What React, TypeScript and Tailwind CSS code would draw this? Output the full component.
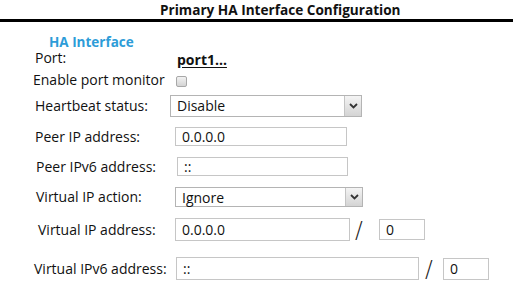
import { useState } from "react"

const font = { fontFamily: '"Open Sans", "Noto Sans", sans-serif' }

function Chevron() {
  return (
    <svg width="9" height="6" viewBox="0 0 9 6">
      <path d="M1 1 L4.5 4.5 L8 1" fill="none" stroke="#333" strokeWidth="1.8" />
    </svg>
  )
}

function FakeSelect({ value, className }: { value: string; className: string }) {
  return (
    <div className={`flex border border-[#b4b4b4] bg-white ${className}`}>
      <div className="flex-1 pl-[6px] text-[14px] leading-[20px] text-[#111]">{value}</div>
      <div className="w-[17px] flex items-center justify-center border-l border-[#c4c4c4] bg-gradient-to-b from-[#f4f4f4] to-[#d4d4d4]">
        <Chevron />
      </div>
    </div>
  )
}

function TextBox({ value, className }: { value: string; className: string }) {
  const [v, setV] = useState(value)
  return (
    <input
      value={v}
      onChange={(e) => setV(e.target.value)}
      className={`border border-[#c6c6c6] bg-white px-[6px] text-[14px] text-[#111] outline-none ${className}`}
      style={font}
    />
  )
}

function Slash({ className }: { className: string }) {
  return (
    <span
      className={`w-[13px] text-[23px] font-extralight leading-[22px] text-[#222] ${className}`}
      style={{ fontFamily: '"DejaVu Sans", sans-serif' }}
    >
      /
    </span>
  )
}

export default function App() {
  const [monitor, setMonitor] = useState(false)

  return (
    <div className="w-[513px] h-[296px] bg-white text-[#111] overflow-hidden" style={font}>
      {/* Title */}
      <div className="h-[19px] pt-[1px] pl-[160px] text-[13.6px] font-bold leading-[17px]">
        Primary HA Interface Configuration
      </div>
      <div className="h-[3px] bg-black" />

      <div className="pt-[12px] text-[14px] leading-[16px]">
        <div className="pl-[49px] text-[13.5px] font-bold text-[#2d9cd8]">HA Interface</div>

        <div className="flex">
          <div className="pl-[35px] w-[177px]">Port:</div>
          <a href="#" className="mt-[2px] font-bold underline underline-offset-2 text-[#111]">port1...</a>
        </div>

        <div className="flex items-center mt-[4px]">
          <div className="pl-[33px] w-[176px]">Enable port monitor</div>
          <input
            type="checkbox"
            checked={monitor}
            onChange={() => setMonitor(!monitor)}
            className="mt-[3px] w-[11px] h-[11px] appearance-none rounded-[2px] border border-[#a8a8a8] bg-gradient-to-b from-[#f2f2f2] to-[#d4d4d4]"
          />
        </div>

        <div className="flex items-center mt-[7px]">
          <div className="pl-[35px] w-[170px]">Heartbeat status:</div>
          <FakeSelect value="Disable" className="w-[192px] h-[22px]" />
        </div>

        <div className="flex items-center mt-[10px]">
          <div className="pl-[35px] w-[175px]">Peer IP address:</div>
          <TextBox value="0.0.0.0" className="w-[172px] h-[19px] leading-[17px]" />
        </div>

        <div className="flex items-center mt-[11px]">
          <div className="pl-[36px] w-[177px]">Peer IPv6 address:</div>
          <TextBox value="::" className="w-[171px] h-[19px] leading-[17px]" />
        </div>

        <div className="flex items-center mt-[11px]">
          <div className="pl-[36px] w-[175px]">Virtual IP action:</div>
          <FakeSelect value="Ignore" className="w-[188px] h-[20px]" />
        </div>

        <div className="flex items-center mt-[11px]">
          <div className="pl-[38px] w-[175px]">Virtual IP address:</div>
          <TextBox value="0.0.0.0" className="w-[175px] h-[23px] px-[2px]" />
          <Slash className="ml-[5px]" />
          <TextBox value="0" className="ml-[11px] w-[46px] h-[21px]" />
        </div>

        <div className="flex items-center mt-[16px]">
          <div className="pl-[34px] w-[176px]">Virtual IPv6 address:</div>
          <TextBox value="::" className="w-[243px] h-[23px]" />
          <Slash className="ml-[6px]" />
          <TextBox value="0" className="ml-[5px] w-[46px] h-[22px] px-[3px]" />
        </div>
      </div>
    </div>
  )
}
